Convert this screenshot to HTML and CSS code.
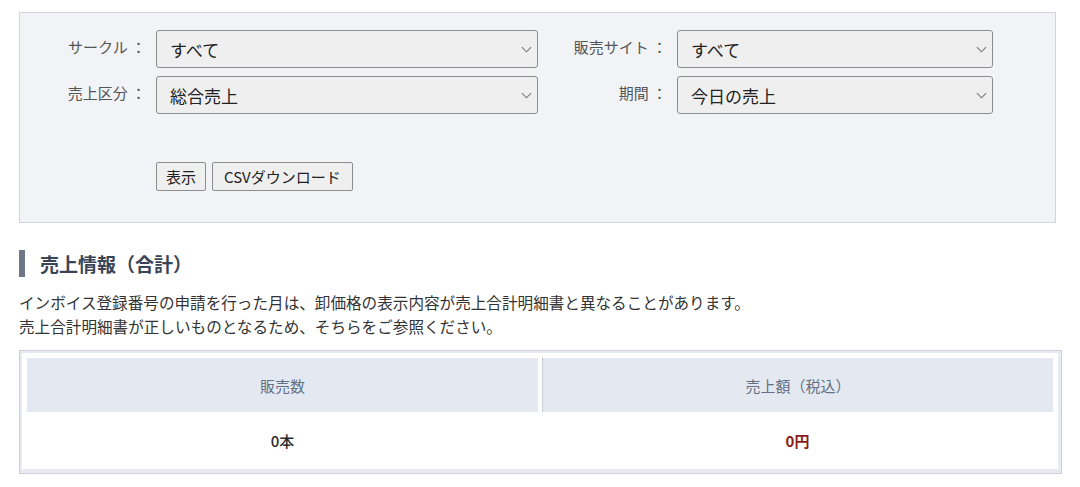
FILE: index.html
```html
<!DOCTYPE html>
<html lang="ja">
<head>
<meta charset="utf-8">
<title>売上情報</title>
<link rel="stylesheet" href="styles.css">
</head>
<body>
<div class="page">
  <form class="filter">
    <label class="lbl">サークル ：</label>
    <div class="sel"><select><option>すべて</option></select><svg class="chev" viewBox="0 0 12 7"><path d="M1 1l5 5 5-5" fill="none" stroke="currentColor" stroke-width="1.2"/></svg></div>
    <label class="lbl">販売サイト ：</label>
    <div class="sel"><select><option>すべて</option></select><svg class="chev" viewBox="0 0 12 7"><path d="M1 1l5 5 5-5" fill="none" stroke="currentColor" stroke-width="1.2"/></svg></div>
    <label class="lbl">売上区分 ：</label>
    <div class="sel"><select><option>総合売上</option></select><svg class="chev" viewBox="0 0 12 7"><path d="M1 1l5 5 5-5" fill="none" stroke="currentColor" stroke-width="1.2"/></svg></div>
    <label class="lbl">期間 ：</label>
    <div class="sel"><select><option>今日の売上</option></select><svg class="chev" viewBox="0 0 12 7"><path d="M1 1l5 5 5-5" fill="none" stroke="currentColor" stroke-width="1.2"/></svg></div>
    <div class="btns">
      <button type="button" class="btn">表示</button>
      <button type="button" class="btn">CSVダウンロード</button>
    </div>
  </form>

  <h2 class="heading">売上情報（合計）</h2>
  <p class="note">インボイス登録番号の申請を行った月は、卸価格の表示内容が売上合計明細書と異なることがあります。<br>売上合計明細書が正しいものとなるため、そちらをご参照ください。</p>

  <div class="summary">
    <div class="summary-inner">
      <div class="row head">
        <div class="cell">販売数</div>
        <div class="cell sep">売上額（税込）</div>
      </div>
      <div class="row data">
        <div class="cell">0本</div>
        <div class="cell price">0円</div>
      </div>
    </div>
  </div>
</div>
</body>
</html>
```

FILE: styles.css
```css
* { box-sizing: border-box; }
html, body { margin: 0; padding: 0; background: #fff; }
body {
  font-family: "Noto Sans CJK JP", "Noto Sans", sans-serif;
  color: #333;
}
.page {
  padding: 12px 18px 0 19px;
}
.filter {
  width: 1037px;
  height: 211px;
  background: #f1f3f6;
  border: 1px solid #cfd5dd;
  padding: 17px 0 0 0;
  display: grid;
  grid-template-columns: 126px 382px 119px 316px;
  grid-template-rows: 38px 38px;
  column-gap: 10px;
  row-gap: 8px;
  align-content: start;
}
.lbl {
  font-size: 15px;
  color: #555;
  text-align: right;
  align-self: center;
  white-space: nowrap;
  margin-top: -5px;
}
.sel {
  position: relative;
  height: 38px;
}
.sel select {
  appearance: none;
  -webkit-appearance: none;
  width: 100%;
  height: 100%;
  background: #efefef;
  border: 1px solid #8d8d8d;
  border-radius: 3px;
  padding: 0 0 0 13px;
  font-family: inherit;
  font-size: 17px;
  color: #222;
}
.chev {
  position: absolute;
  right: 6px;
  top: 16px;
  width: 11px;
  height: 7px;
  color: #777;
  pointer-events: none;
}
.btns {
  grid-column: 2 / 4;
  display: flex;
  gap: 6px;
  margin-top: 40px;
}
.btn {
  height: 29px;
  background: #efefef;
  border: 1px solid #8d8d8d;
  border-radius: 2px;
  font-family: inherit;
  font-size: 15px;
  color: #222;
  padding: 0 9px;
}
.btn + .btn { padding: 0 11px; }
.heading {
  margin: 27px 0 0 0;
  border-left: 6px solid #6b7689;
  padding-left: 15px;
  font-size: 19px;
  line-height: 27px;
  font-weight: 700;
  color: #3a4456;
}
.note {
  margin: 13px 0 0 0;
  font-size: 15.6px;
  line-height: 24px;
  color: #333;
}
.summary {
  margin-top: 12px;
  width: 1043px;
  border: 1px solid #c9d0da;
  background: #e7ebf1;
  padding: 2px 3px 4px 2px;
}
.summary-inner {
  background: #fff;
  padding: 5px 5px 0 5px;
}
.row {
  display: grid;
  grid-template-columns: 511px 1fr;
  column-gap: 4px;
}
.head .cell {
  height: 54px;
  background: #e4e9f1;
  color: #627185;
  font-size: 15px;
  display: flex;
  align-items: center;
  justify-content: center;
}
.head .sep { border-left: 1px dotted #aeb6c1; }
.data .cell {
  height: 57px;
  display: flex;
  align-items: center;
  justify-content: center;
  font-size: 15px;
  font-weight: 500;
  color: #2a2a2a;
}
.data .price { color: #8c1c1c; font-weight: 700; }
```
